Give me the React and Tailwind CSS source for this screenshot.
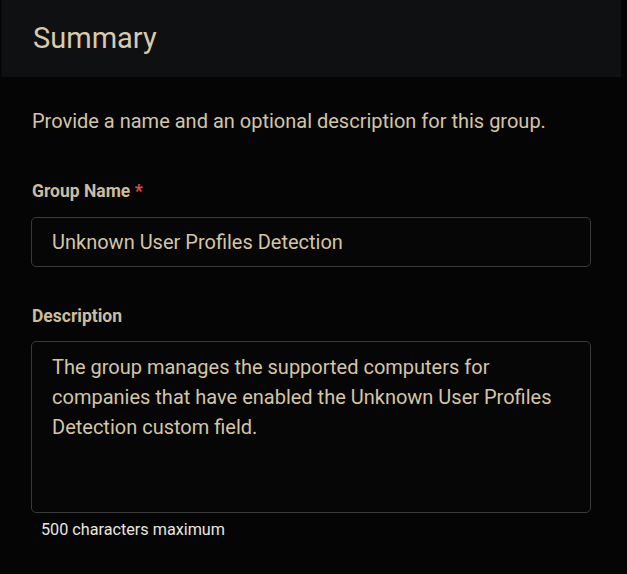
export default function App() {
  return (
    <div
      className="min-h-[574px] w-full bg-[#050505] pb-8"
      style={{ fontFamily: "Roboto, 'Liberation Sans', sans-serif" }}
    >
      <div className="ml-px mr-[6px] flex h-[77px] items-center border-l border-[#0a0a0a] bg-[#0f1011] px-[31px]">
        <h1 className="text-[29px] font-normal leading-none text-[#d7caae]">Summary</h1>
      </div>

      <div className="px-[31px] pt-[31px]">
        <p className="pl-px text-[20px] leading-[26px] text-[#d3c5a6]">
          Provide a name and an optional description for this group.
        </p>

        <label className="mt-[46px] block pl-px text-[17.5px] font-bold leading-[22px] text-[#cbbd9e]">
          Group Name <span className="text-[#e5484d]">*</span>
        </label>
        <input
          type="text"
          defaultValue="Unknown User Profiles Detection"
          className="mt-[15px] block h-[50px] w-[560px] rounded-[5px] border border-[#3a3a3a] bg-[#060606] px-[20px] text-[20px] text-[#d3c5a6] outline-none"
        />

        <label className="mt-[38px] block pl-px text-[17.5px] font-bold leading-[22px] text-[#cbbd9e]">
          Description
        </label>
        <textarea
          defaultValue="The group manages the supported computers for companies that have enabled the Unknown User Profiles Detection custom field."
          className="mt-[14px] block h-[172px] w-[560px] resize-none rounded-[5px] border border-[#3a3a3a] bg-[#060606] px-[20px] pt-[10px] pb-[12px] text-[20px] leading-[30px] text-[#d3c5a6] outline-none"
        />
        <p className="mt-[7px] pl-[10px] text-[16.2px] leading-[20px] text-[#e8e6e1]">500 characters maximum</p>
      </div>
    </div>
  );
}
